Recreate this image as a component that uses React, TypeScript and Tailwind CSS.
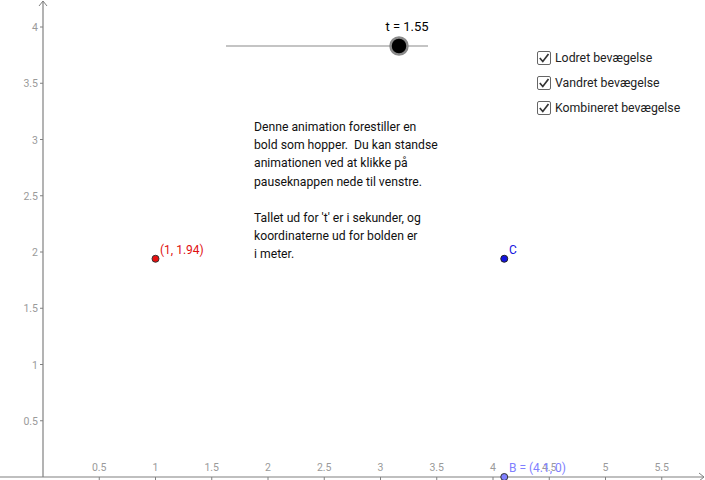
import React from 'react';

const OX = 43;
const OY = 477;
const U = 112.5;

const px = (x: number) => OX + x * U;
const py = (y: number) => OY - y * U;

const yTicks = [0.5, 1, 1.5, 2, 2.5, 3, 3.5, 4];
const xTicks = [0.5, 1, 1.5, 2, 2.5, 3, 3.5, 4, 4.5, 5, 5.5];

const options = ['Lodret bevægelse', 'Vandret bevægelse', 'Kombineret bevægelse'];

const CheckBox = () => (
  <svg width="14" height="14" viewBox="0 0 14 14" className="shrink-0">
    <rect x="0.5" y="0.5" width="13" height="13" rx="1.5" fill="#fff" stroke="#666" />
    <path d="M2.8 7 L5.8 10.5 L11.5 3" fill="none" stroke="#333" strokeWidth="1.7" />
  </svg>
);

const Graph = () => (
  <svg width="705" height="480" className="absolute inset-0" style={{ fontFamily: 'Roboto, "Liberation Sans", sans-serif' }}>
    {/* axes */}
    <line x1={OX} y1={OY} x2={OX} y2={1} stroke="#808080" strokeWidth="1.2" />
    <path d={`M${OX - 4} 6 L${OX} 1 L${OX + 4} 6`} fill="none" stroke="#808080" strokeWidth="1" />
    <line x1={0} y1={OY} x2={704} y2={OY} stroke="#808080" strokeWidth="1.2" />
    <path d={`M699 ${OY - 4} L704 ${OY} L699 ${OY + 4}`} fill="none" stroke="#808080" strokeWidth="1" />

    {yTicks.map((t) => (
      <g key={`y${t}`}>
        <line x1={OX - 3} y1={py(t)} x2={OX} y2={py(t)} stroke="#808080" />
        <text x={OX - 5} y={py(t) + 4} textAnchor="end" fontSize="10.5" fill="#9a9a9a">
          {t}
        </text>
      </g>
    ))}
    {xTicks.map((t) => (
      <g key={`x${t}`}>
        <line x1={px(t)} y1={OY} x2={px(t)} y2={OY + 3} stroke="#808080" />
        <text x={px(t)} y={OY - 6} textAnchor="middle" fontSize="10.5" fill="#9a9a9a">
          {t}
        </text>
      </g>
    ))}

    {/* slider */}
    <line x1={226} y1={46} x2={428} y2={46} stroke="#8a8a8a" strokeWidth="1.2" />
    <circle cx={399} cy={46} r={8.5} fill="#000" stroke="#8a8a8a" strokeWidth="2.5" />
    <text x={407} y={31} textAnchor="middle" fontSize="13" fill="#000">
      t = 1.55
    </text>

    {/* red point */}
    <circle cx={px(1)} cy={py(1.94)} r={3.5} fill="#e81010" stroke="#333" strokeWidth="1" />
    <text x={160} y={254} fontSize="12" fill="#e01010">
      (1, 1.94)
    </text>

    {/* C */}
    <circle cx={px(4.1)} cy={py(1.94)} r={3.5} fill="#1414e0" stroke="#222" strokeWidth="1" />
    <text x={509} y={254} fontSize="12" fill="#1414e0">
      C
    </text>

    {/* B */}
    <circle cx={px(4.1)} cy={OY} r={3.5} fill="#8080ff" stroke="#333" strokeWidth="1" />
    <text x={509} y={472} fontSize="12" fill="#8080ff">
      B = (4.1, 0)
    </text>
  </svg>
);

export default function App() {
  return (
    <div className="relative w-[705px] h-[480px] overflow-hidden bg-white font-['Roboto','Liberation_Sans',sans-serif]">
      <Graph />

      <div className="absolute left-[537px] top-[51px] flex flex-col gap-[11px] text-[12.3px] text-[#222]">
        {options.map((o) => (
          <label key={o} className="flex items-center gap-[4px] h-[14px] leading-none">
            <CheckBox />
            <span>{o}</span>
          </label>
        ))}
      </div>

      <div className="absolute left-[254px] top-[118px] text-[12.2px] leading-[18.2px] text-[#111]">
        <p>Denne animation forestiller en</p>
        <p>bold som hopper.&nbsp;&nbsp;Du kan standse</p>
        <p>animationen ved at klikke på</p>
        <p>pauseknappen nede til venstre.</p>
        <p>&nbsp;</p>
        <p>Tallet ud for 't' er i sekunder, og</p>
        <p>koordinaterne ud for bolden er</p>
        <p>i meter.</p>
      </div>
    </div>
  );
}
